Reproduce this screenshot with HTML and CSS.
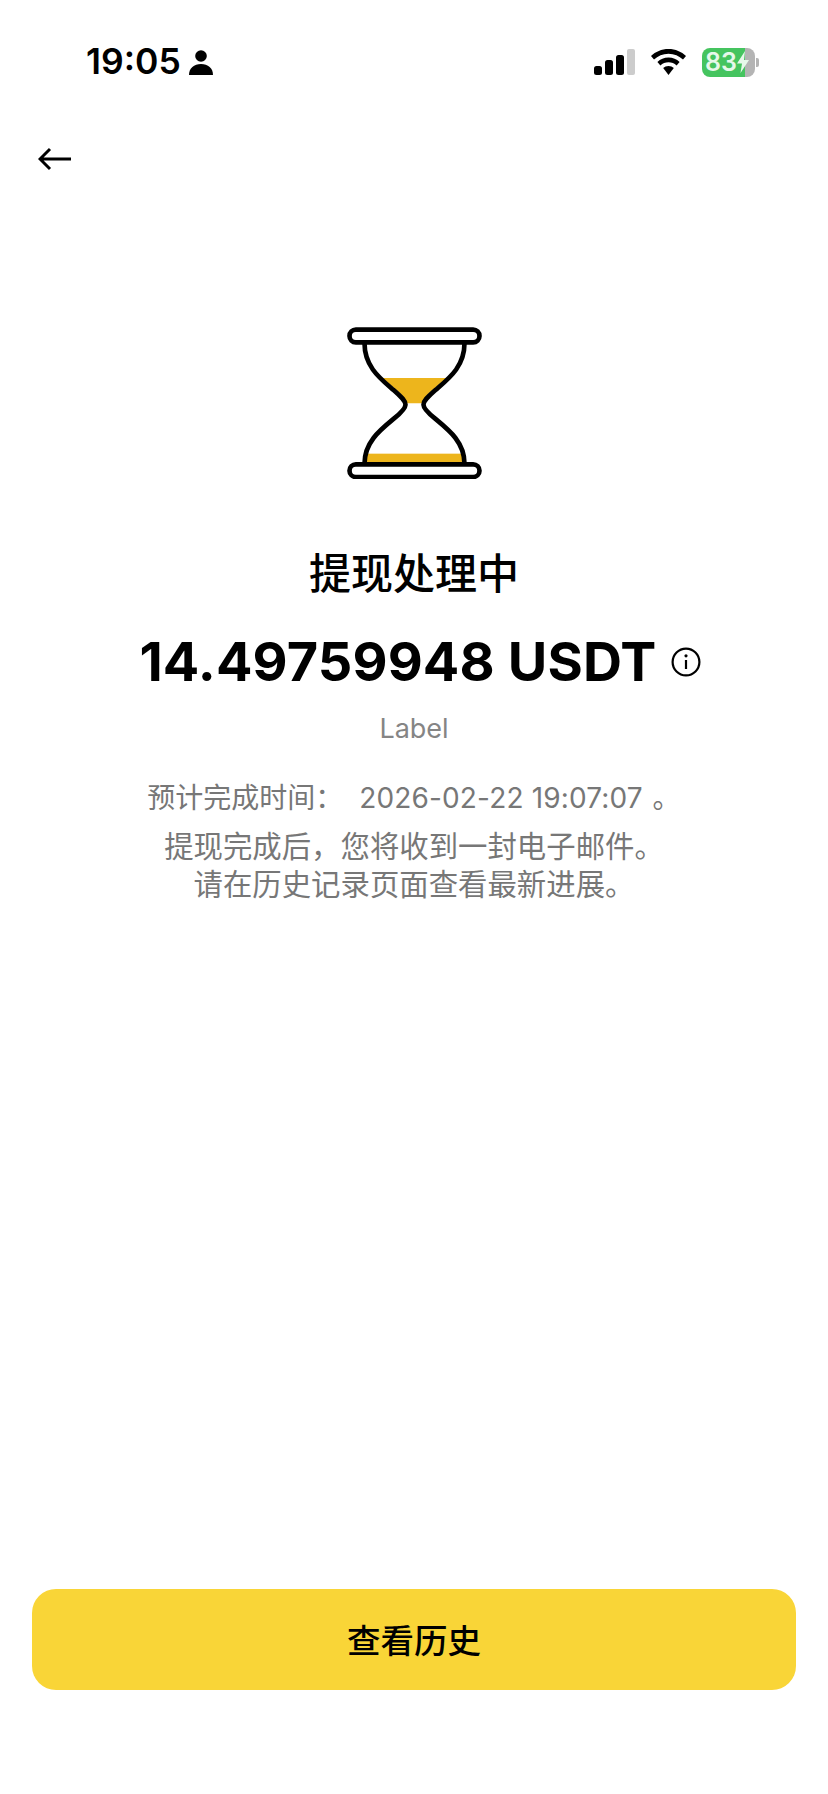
FILE: index.html
```html
<!DOCTYPE html>
<html lang="zh-CN">

<head>
  <meta charset="UTF-8">
  <meta name="viewport" content="width=device-width, initial-scale=1.0">
  <title>提现处理中</title>
  <link rel="stylesheet" href="styles.css">
</head>

<body>
  <div class="page">
    <div class="status-bar">
      <div class="status-left">
        <span class="clock">19:05</span>
        <svg class="person" viewBox="0 0 24 25">
          <circle cx="12" cy="6" r="5.8" />
          <path d="M0 25C0 18 5 14 12 14S24 18 24 25Z" />
        </svg>
      </div>
      <div class="status-right">
        <svg class="signal" viewBox="0 0 41 26">
          <rect x="0" y="17" width="8" height="9" rx="2.5" fill="#000" />
          <rect x="11" y="11" width="8" height="15" rx="2.5" fill="#000" />
          <rect x="22" y="6" width="8" height="20" rx="2.5" fill="#000" />
          <rect x="33" y="0" width="8" height="26" rx="2" fill="#ccc" />
        </svg>
        <svg class="wifi" viewBox="0 0 35 26">
          <path d="M17.5 0C24.5 0 30.5 2.7 35 7L32 10.6C28.2 7 23.2 4.8 17.5 4.8S6.8 7 3 10.6L0 7C4.5 2.7 10.5 0 17.5 0Z" />
          <path d="M17.5 8.6C21.9 8.6 25.6 10.2 28.6 12.9L25.6 16.4C23.4 14.5 20.6 13.3 17.5 13.3S11.6 14.5 9.4 16.4L6.4 12.9C9.4 10.2 13.1 8.6 17.5 8.6Z" />
          <path d="M17.5 17C19.6 17 21.4 17.7 22.8 19L17.5 26L12.2 19C13.6 17.7 15.4 17 17.5 17Z" />
        </svg>
        <div class="battery-wrap">
          <div class="battery">
            <span class="battery-level">83</span>
            <svg class="bolt" viewBox="0 0 12 22">
              <path d="M8 0L0 12.5H5L3.5 22L12 9H7Z" />
            </svg>
          </div>
          <div class="battery-nub"></div>
        </div>
      </div>
    </div>

    <div class="nav">
      <svg class="back" viewBox="0 0 34 24">
        <path d="M33 12H2M12 2L2 12L12 22" />
      </svg>
    </div>

    <div class="content">
      <svg class="hourglass" viewBox="50 50 404 456">
        <path class="sand" d="M156 203H348L305 240C288 254 279 268 277 279H227C225 268 216 254 199 240Z" />
        <rect class="sand" x="106" y="430" width="292" height="30" />
        <path class="glass" d="M102 98C102 170 150 205 190 240C215 262 225 272 225 283C225 294 212 307 190 325C150 358 102 395 102 460" />
        <path class="glass" d="M402 98C402 170 354 205 314 240C289 262 279 272 279 283C279 294 292 307 314 325C354 358 402 395 402 460" />
        <rect class="glass" x="57" y="58" width="390" height="38" rx="19" />
        <rect class="glass" x="57" y="462" width="390" height="38" rx="19" />
      </svg>

      <h1 class="title">提现处理中</h1>

      <div class="amount-row">
        <span class="amount">14.49759948 USDT</span>
        <svg class="info" viewBox="0 0 30 30">
          <circle cx="15" cy="15" r="13.4" />
          <path d="M15 13V22" />
          <circle class="info-dot" cx="15" cy="8.8" r="1.6" />
        </svg>
      </div>

      <div class="label">Label</div>
      <div class="eta">预计完成时间： <span class="eta-time">2026-02-22 19:07:07</span> 。</div>
      <p class="note">提现完成后，您将收到一封电子邮件。<br>请在历史记录页面查看最新进展。</p>
    </div>

    <div class="footer">
      <button class="history-btn">查看历史</button>
    </div>
  </div>
</body>

</html>
```

FILE: styles.css
```css
* {
  padding: 0;
  margin: 0;
  border: 0;
  box-sizing: border-box;
  font-family: Inter, "Noto Sans CJK SC", sans-serif;
}

body {
  background: #fff;
  color: #000;
}

.page {
  display: flex;
  flex-direction: column;
  width: 828px;
  height: 1794px;
}

.status-bar {
  display: flex;
  justify-content: space-between;
  align-items: center;
  height: 30px;
  margin-top: 47px;
  padding: 0 69px 0 86px;
}

.status-left {
  display: flex;
  align-items: center;
  gap: 8px;
}

.clock {
  font-size: 35.5px;
  font-weight: 600;
  line-height: 30px;
}

.person {
  width: 24px;
  height: 25px;
  fill: #000;
}

.status-right {
  display: flex;
  align-items: center;
  gap: 16px;
}

.signal {
  width: 41px;
  height: 26px;
}

.wifi {
  width: 35px;
  height: 26px;
  fill: #000;
}

.battery-wrap {
  display: flex;
  align-items: center;
  gap: 1px;
}

.battery {
  display: flex;
  align-items: center;
  width: 53px;
  height: 29px;
  padding-left: 3px;
  border-radius: 8px;
  background: linear-gradient(90deg, #45c45f 0, #45c45f 82%, #b4b4b4 82%);
}

.battery-level {
  font-size: 25px;
  font-weight: 600;
  line-height: 29px;
  color: #e6f8ea;
}

.bolt {
  width: 12px;
  height: 22px;
  fill: #e6f8ea;
}

.battery-nub {
  width: 3px;
  height: 9px;
  border-radius: 0 2px 2px 0;
  background: #b4b4b4;
}

.nav {
  margin-top: 70px;
  padding-left: 38px;
  height: 24px;
}

.back {
  display: block;
  width: 34px;
  height: 24px;
  fill: none;
  stroke: #000;
  stroke-width: 3;
}

.content {
  flex: 1;
  display: flex;
  flex-direction: column;
  align-items: center;
}

.hourglass {
  width: 135px;
  height: 152px;
  margin-top: 156px;
}

.sand {
  fill: #edb51c;
}

.glass {
  fill: none;
  stroke: #000;
  stroke-width: 14;
}

.title {
  margin-top: 70px;
  font-size: 42px;
  font-weight: 500;
  line-height: 50px;
}

.amount-row {
  display: flex;
  align-items: center;
  gap: 14px;
  margin-top: 29px;
  padding-left: 12px;
}

.amount {
  font-size: 54px;
  font-weight: 700;
  line-height: 68px;
  letter-spacing: 0.15px;
}

.info {
  width: 30px;
  height: 30px;
  fill: none;
  stroke: #000;
  stroke-width: 2.2;
}

.info-dot {
  fill: #000;
  stroke: none;
}

.label {
  margin-top: 16px;
  font-size: 27px;
  line-height: 34px;
  color: #858585;
}

.eta {
  margin-top: 35px;
  font-size: 28px;
  line-height: 34px;
  color: #777;
}

.eta-time {
  margin-left: 8px;
  margin-right: 2px;
  letter-spacing: 0.15px;
}

.note {
  margin-top: 13px;
  font-size: 29.4px;
  line-height: 38px;
  text-align: center;
  color: #777;
}

.footer {
  padding: 0 32px 104px 32px;
}

.history-btn {
  display: block;
  width: 100%;
  height: 101px;
  padding-bottom: 3px;
  border-radius: 24px;
  background: #f9d537;
  font-size: 33.5px;
  font-weight: 500;
  color: #000;
}
```
